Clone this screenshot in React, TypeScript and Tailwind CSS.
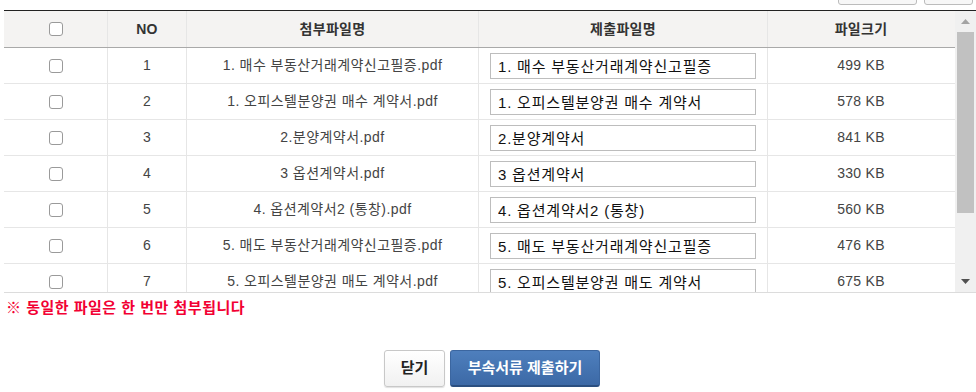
import React from 'react';

type Row = {
  no: number;
  attach: string;
  submit: string;
  size: string;
};

const rows: Row[] = [
  { no: 1, attach: '1. 매수 부동산거래계약신고필증.pdf', submit: '1. 매수 부동산거래계약신고필증', size: '499 KB' },
  { no: 2, attach: '1. 오피스텔분양권 매수 계약서.pdf', submit: '1. 오피스텔분양권 매수 계약서', size: '578 KB' },
  { no: 3, attach: '2.분양계약서.pdf', submit: '2.분양계약서', size: '841 KB' },
  { no: 4, attach: '3 옵션계약서.pdf', submit: '3 옵션계약서', size: '330 KB' },
  { no: 5, attach: '4. 옵션계약서2 (통창).pdf', submit: '4. 옵션계약서2 (통창)', size: '560 KB' },
  { no: 6, attach: '5. 매도 부동산거래계약신고필증.pdf', submit: '5. 매도 부동산거래계약신고필증', size: '476 KB' },
  { no: 7, attach: '5. 오피스텔분양권 매도 계약서.pdf', submit: '5. 오피스텔분양권 매도 계약서', size: '675 KB' },
];

const cols = 'grid grid-cols-[104px_79px_292px_289px_186px]';

const Check = () => (
  <input
    type="checkbox"
    className="appearance-none w-[14px] h-[14px] rounded-[3px] border border-[#9a9a9a] bg-white"
  />
);

export default function App() {
  return (
    <div
      className="w-[976px] h-[392px] bg-white overflow-hidden text-[#444]"
      style={{ fontFamily: '"Liberation Sans", "Noto Sans CJK KR", sans-serif' }}
    >
      {/* partially visible toolbar buttons */}
      <div className="h-[10px] overflow-hidden flex justify-end gap-[7px] pr-[3px]">
        <button className="w-[79px] h-[30px] -mt-[25px] rounded-[3px] border border-[#bcbcbc] bg-[#f7f7f7]" />
        <button className="w-[49px] h-[30px] -mt-[25px] rounded-[3px] border border-[#bcbcbc] bg-[#f7f7f7]" />
      </div>

      {/* table */}
      <div className="flex border-t border-[#222] border-b border-b-[#dcdcdc] ml-[4px]">
        <div className="flex-1 h-[281px] overflow-hidden">
          <div className={`${cols} h-[37px] bg-[#f4f3f2] border-b border-[#a9a9a9] text-[14px] font-bold text-[#333] tracking-[0.3px]`}>
            <div className="flex items-center justify-center border-r border-[#e6e6e6]">
              <Check />
            </div>
            <div className="flex items-center justify-center border-r border-[#e6e6e6]">NO</div>
            <div className="flex items-center justify-center border-r border-[#e6e6e6]">첨부파일명</div>
            <div className="flex items-center justify-center border-r border-[#e6e6e6]">제출파일명</div>
            <div className="flex items-center justify-center">파일크기</div>
          </div>
          {rows.map((r) => (
            <div key={r.no} className={`${cols} h-[36px] border-b border-[#e6e6e6] text-[14px]`}>
              <div className="flex items-center justify-center border-r border-[#e6e6e6]">
                <Check />
              </div>
              <div className="flex items-center justify-center border-r border-[#e6e6e6]">{r.no}</div>
              <div className="flex items-center justify-center border-r border-[#e6e6e6] whitespace-nowrap tracking-[0.45px]">
                {r.attach}
              </div>
              <div className="flex items-center pl-[11px] border-r border-[#e6e6e6]">
                <input
                  readOnly
                  value={r.submit}
                  className="w-[266px] h-[26px] border border-[#bdbdbd] px-[7px] text-[15px] tracking-[0.8px] text-[#111] outline-none"
                />
              </div>
              <div className="flex items-center justify-center tracking-[0.3px]">{r.size}</div>
            </div>
          ))}
        </div>

        {/* scrollbar */}
        <div className="w-[21px] h-[281px] bg-[#f0f0f0] flex flex-col items-center">
          <div className="h-[21px] flex items-center justify-center">
            <svg width="9" height="5" viewBox="0 0 9 5">
              <path d="M0 5 L4.5 0 L9 5 Z" fill="#a3a3a3" />
            </svg>
          </div>
          <div className="w-[17px] h-[181px] bg-[#c1c1c1]" />
          <div className="flex-1" />
          <div className="h-[21px] flex items-center justify-center">
            <svg width="9" height="5" viewBox="0 0 9 5">
              <path d="M0 0 L9 0 L4.5 5 Z" fill="#505050" />
            </svg>
          </div>
        </div>
      </div>

      <p className="mt-[6px] ml-[6px] text-[15px] font-bold text-[#f20033] leading-[18px] tracking-[0.5px]">
        ※ 동일한 파일은 한 번만 첨부됩니다
      </p>

      <div className="mt-[33px] flex justify-center gap-[5px] pl-[8px]">
        <button className="w-[61px] h-[37px] rounded-[3px] border border-[#c8c8c8] bg-gradient-to-b from-white to-[#f1f1f1] shadow-[0_1px_1px_rgba(0,0,0,0.12)] text-[15px] font-bold text-[#222]">
          닫기
        </button>
        <button className="w-[150px] h-[37px] rounded-[3px] border border-[#3b66a0] border-b-[2px] border-b-[#2b4f80] bg-gradient-to-b from-[#4e7fbd] to-[#3c69a6] text-[15px] font-bold text-white">
          부속서류 제출하기
        </button>
      </div>
    </div>
  );
}
